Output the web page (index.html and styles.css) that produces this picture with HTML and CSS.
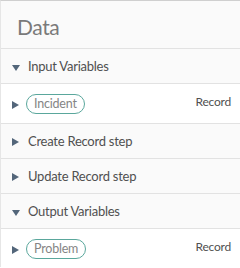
FILE: index.html
```html
<!DOCTYPE html>
<html>
<head>
<meta charset="utf-8">
<link rel="stylesheet" href="styles.css">
</head>
<body>
<div class="panel">
  <div class="header">Data</div>
  <div class="section"><span class="tri down"></span><span class="label">Input Variables</span></div>
  <div class="var"><span class="tri right"></span><span class="pill">Incident</span><span class="type">Record</span></div>
  <div class="section"><span class="tri right"></span><span class="label">Create Record step</span></div>
  <div class="section"><span class="tri right"></span><span class="label">Update Record step</span></div>
  <div class="section"><span class="tri down"></span><span class="label">Output Variables</span></div>
  <div class="var"><span class="tri right"></span><span class="pill">Problem</span><span class="type">Record</span></div>
</div>
</body>
</html>
```

FILE: styles.css
```css
html, body {
  margin: 0;
  padding: 0;
  background: #fff;
}
body {
  font-family: "Lato", "Noto Sans", sans-serif;
  width: 240px;
  height: 268px;
  overflow: hidden;
}
.panel {
  border-top: 1px solid #cfcfcf;
  border-left: 1px solid #e6e6e6;
  height: 267px;
  box-sizing: border-box;
}
.header {
  height: 48px;
  box-sizing: border-box;
  padding: 15px 0 0 16px;
  font-size: 21px;
  letter-spacing: -0.4px;
  color: #7a7a7a;
  background: #fafafa;
  border-bottom: 1px solid #e2e2e2;
  line-height: 22px;
}
.section {
  height: 35px;
  box-sizing: border-box;
  display: flex;
  align-items: center;
  background: #fafafa;
  border-bottom: 1px solid #e2e2e2;
  padding-left: 11px;
  font-size: 13px;
  letter-spacing: -0.25px;
  color: #505050;
}
.var {
  height: 40px;
  box-sizing: border-box;
  display: flex;
  align-items: center;
  background: #fff;
  border-bottom: 1px solid #e2e2e2;
  padding-left: 11px;
  font-size: 12px;
}
.tri {
  width: 0;
  height: 0;
  flex: none;
}
.tri.right {
  border-top: 4px solid transparent;
  border-bottom: 4px solid transparent;
  border-left: 7px solid #53667a;
  margin-right: 8px;
  margin-top: 2px;
}
.section .tri.right {
  margin-right: 9px;
}
.var .tri.right {
  margin-right: 7px;
}
.tri.down {
  border-left: 4px solid transparent;
  border-right: 4px solid transparent;
  border-top: 6px solid #53667a;
  margin-right: 8px;
  margin-top: 3px;
}
.label {
  line-height: 16px;
}
.pill {
  border: 1px solid #5aa79c;
  border-radius: 10px;
  height: 20px;
  box-sizing: border-box;
  padding: 0 7px;
  line-height: 18px;
  color: #858585;
  font-size: 12.5px;
  letter-spacing: -0.2px;
}
.type {
  margin-left: auto;
  margin-right: 9px;
  color: #505050;
  font-size: 12px;
  letter-spacing: -0.2px;
  margin-top: -4px;
}
```
